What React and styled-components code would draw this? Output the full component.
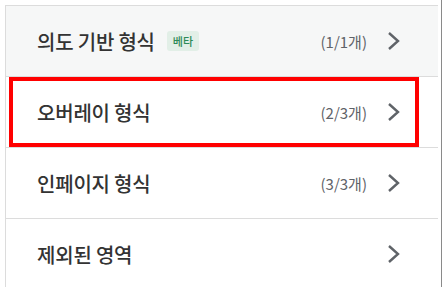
import styled, { createGlobalStyle } from "styled-components";

const GlobalStyle = createGlobalStyle`
  html, body {
    margin: 0;
    padding: 0;
    background: #ffffff;
  }
  body {
    font-family: "Noto Sans CJK KR", "Noto Sans", sans-serif;
  }
`;

const Frame = styled.div`
  width: 442px;
  height: 287px;
  overflow: hidden;
  box-sizing: border-box;
  padding: 5px 0 0 5px;
  display: flex;
  border-right: 1px solid #8a8a8a;
`;

const List = styled.ul`
  list-style: none;
  margin: 0;
  padding: 0;
  width: 432px;
  border-left: 1px solid #dcdcdc;
  border-top: 1px solid #dcdcdc;
`;

const Row = styled.li`
  position: relative;
  height: 70px;
  display: flex;
  align-items: center;
  padding: 0 38px 0 31px;
  border-bottom: 1px solid #dcdcdc;
  background: ${(p) => (p.$active ? "#f6f7f7" : "#ffffff")};
`;

const Title = styled.span`
  font-size: 20px;
  font-weight: 500;
  color: #333333;
  letter-spacing: -0.2px;
`;

const Badge = styled.span`
  margin-left: 12px;
  padding: 2px 6px;
  border-radius: 3px;
  background: #e2efe7;
  color: #2d8a57;
  font-size: 11px;
  font-weight: 500;
  line-height: 16px;
`;

const Count = styled.span`
  margin-left: auto;
  margin-right: 20px;
  font-size: 15px;
  color: #5f6368;
`;

const Chevron = styled.svg`
  flex: none;
  width: 13px;
  height: 20px;
  margin-left: ${(p) => (p.$alone ? "auto" : "0")};
`;

const Highlight = styled.div`
  position: absolute;
  left: 3px;
  right: 19px;
  top: 0;
  bottom: 0;
  border: 4px solid #ff0000;
  pointer-events: none;
`;

const items = [
  { title: "의도 기반 형식", badge: "베타", count: "(1/1개)", active: true },
  { title: "오버레이 형식", count: "(2/3개)", highlight: true },
  { title: "인페이지 형식", count: "(3/3개)" },
  { title: "제외된 영역" },
];

const Arrow = ({ alone }) => (
  <Chevron $alone={alone} viewBox="0 0 13 20">
    <polyline
      points="2,2 11,10 2,18"
      fill="none"
      stroke="#5f6368"
      strokeWidth="2.4"
    />
  </Chevron>
);

export default function App() {
  return (
    <>
      <GlobalStyle />
      <Frame>
        <List>
          {items.map((it) => (
            <Row key={it.title} $active={it.active}>
              <Title>{it.title}</Title>
              {it.badge && <Badge>{it.badge}</Badge>}
              {it.count && <Count>{it.count}</Count>}
              <Arrow alone={!it.count} />
              {it.highlight && <Highlight />}
            </Row>
          ))}
        </List>
      </Frame>
    </>
  );
}
